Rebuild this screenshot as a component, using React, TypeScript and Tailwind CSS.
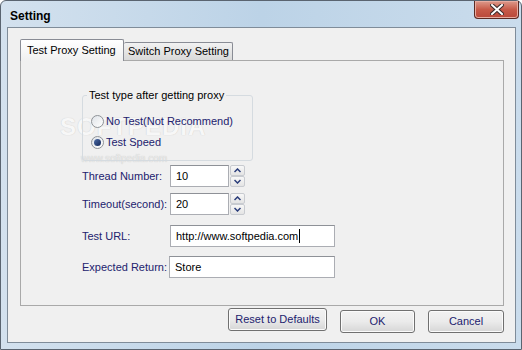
import type { ReactNode } from 'react'

const font = { fontFamily: '"Liberation Sans", Arial, sans-serif' }

function Radio({ checked, label }: { checked?: boolean; label: string }) {
  return (
    <label className="flex h-[14px] items-center gap-[1px] text-[11px] text-[#22226e]">
      <span className="flex h-[13px] w-[13px] items-center justify-center rounded-full border border-[#8e9297] bg-gradient-to-br from-[#dfe3e8] to-[#ffffff]">
        {checked && (
          <span className="h-[7px] w-[7px] rounded-full bg-gradient-to-br from-[#4f6ea8] to-[#14285a]" />
        )}
      </span>
      <span className="ml-[1px]">{label}</span>
    </label>
  )
}

function Chevron({ up }: { up?: boolean }) {
  return (
    <svg width="7" height="5" viewBox="0 0 7 5">
      <path
        d={up ? 'M0.5 4 L3.5 1 L6.5 4' : 'M0.5 1 L3.5 4 L6.5 1'}
        fill="none"
        stroke="#2a3d7a"
        strokeWidth="1.5"
      />
    </svg>
  )
}

function Spinner() {
  return (
    <div className="ml-[1px] flex h-[22px] w-[15px] flex-col">
      <button className="flex h-[11px] items-center justify-center rounded-[2px] border border-[#c8cbd0] bg-gradient-to-b from-[#f8f8f8] to-[#e4e4e4]">
        <Chevron up />
      </button>
      <button className="flex h-[11px] items-center justify-center rounded-[2px] border border-[#c8cbd0] bg-gradient-to-b from-[#f8f8f8] to-[#e4e4e4]">
        <Chevron />
      </button>
    </div>
  )
}

function Field({ label, labelWidth, children }: { label: string; labelWidth: string; children: ReactNode }) {
  return (
    <div className="flex h-[22px] items-center">
      <span className={`${labelWidth} text-[11px] text-[#22226e]`}>{label}</span>
      {children}
    </div>
  )
}

function Input({ value, width, caret }: { value: string; width: string; caret?: boolean }) {
  return (
    <div
      className={`${width} flex h-[22px] items-center border border-[#abadb3] border-t-[#8e9197] bg-white pl-[5px] text-[11px] text-black`}
    >
      {value}
      {caret && <span className="ml-[1px] h-[14px] w-px bg-black" />}
    </div>
  )
}

function DialogButton({ children, width }: { children: ReactNode; width: string }) {
  return (
    <button
      className={`${width} h-[23px] rounded-[3px] border border-[#707070] bg-gradient-to-b from-[#f2f2f2] via-[#ebebeb] to-[#d6d6d6] text-[11px] text-[#22226e] shadow-[inset_0_0_0_1px_#fbfbfb]`}
    >
      {children}
    </button>
  )
}

export default function App() {
  return (
    <div style={font} className="h-[350px] w-[522px] overflow-hidden bg-white">
      <div className="flex h-[350px] w-[522px] flex-col rounded-t-[6px] border border-[#5a6470] bg-gradient-to-r from-[#d3e1ee] via-[#bcd3e7] to-[#cadcec] pb-[6px] pl-[6px] pr-[5px]">
        {/* title bar */}
        <div className="flex h-[26px] shrink-0 items-start justify-between">
          <span className="mt-[8px] pl-[3px] text-[12px] font-bold leading-[14px] text-black">Setting</span>
          <button className="mr-[-3px] flex h-[18px] w-[45px] items-center justify-center rounded-b-[4px] border border-t-0 border-[#5b2a23] bg-gradient-to-b from-[#dc9a8c] via-[#c75a48] to-[#b9483a] shadow-[inset_0_0_0_1px_#e8aca0]">
            <svg width="14" height="11" viewBox="0 0 14 11">
              <path d="M2 1 L12 10 M12 1 L2 10" stroke="#3a2a2a" strokeWidth="4" strokeLinecap="square" />
              <path d="M2 1 L12 10 M12 1 L2 10" stroke="#ffffff" strokeWidth="2" strokeLinecap="square" />
            </svg>
          </button>
        </div>

        {/* client area */}
        <div className="flex h-[316px] flex-col border border-[#7f8c99] bg-[#f0f0f0] pl-[12px] pr-[11px] pt-[11px]">
          {/* tabs */}
          <div className="flex h-[21px] items-end">
            <div className="relative z-10 -mb-px flex h-[22px] w-[104px] items-center rounded-t-[2px] border border-b-0 border-[#898c95] bg-gradient-to-b from-[#ffffff] to-[#f0f0f0] pl-[6px] text-[11px] text-black">
              Test Proxy Setting
            </div>
            <div className="flex h-[18px] w-[109px] items-center rounded-t-[2px] border border-b-0 border-l-0 border-[#898c95] bg-gradient-to-b from-[#f2f2f2] to-[#d9d9d9] pl-[4px] text-[11px] text-black">
              Switch Proxy Setting
            </div>
          </div>

          {/* panel */}
          <div className="relative h-[246px] border border-[#a9a9a9] bg-[#f0f0f0] pl-[61px] pt-[28px]">
            {/* watermark */}
            <span className="pointer-events-none absolute left-[39px] top-[48px] text-[24px] font-bold tracking-[1px] text-[#f7f7f7] [text-shadow:0_0_1px_#c4c4c4]">
              SOFTPEDIA
            </span>
            <span className="pointer-events-none absolute left-[60px] top-[90px] text-[10px] text-[#ebebeb] [text-shadow:0_0_1px_#bdbdbd]">
              www.softpedia.com
            </span>

            <fieldset className="relative h-[72px] w-[171px] rounded-[3px] border border-[#d5dbe0] pb-[10px]">
              <legend className="ml-[4px] px-[2px] text-[11px] leading-[13px] text-black">
                Test type after getting proxy
              </legend>
              <div className="mt-[12px] flex flex-col gap-[7px] pl-[8px]">
                <Radio label="No Test(Not Recommend)" />
                <Radio checked label="Test Speed" />
              </div>
            </fieldset>

            <div className="mt-[4px] flex flex-col">
              <Field label="Thread Number:" labelWidth="w-[88px]">
                <Input value="10" width="w-[59px]" />
                <Spinner />
              </Field>
              <div className="mt-[6px]">
                <Field label="Timeout(second):" labelWidth="w-[88px]">
                  <Input value="20" width="w-[59px]" />
                  <Spinner />
                </Field>
              </div>
              <div className="mt-[10px]">
                <Field label="Test URL:" labelWidth="w-[88px]">
                  <Input value="http://www.softpedia.com" width="w-[165px]" caret />
                </Field>
              </div>
              <div className="mt-[9px]">
                <Field label="Expected Return:" labelWidth="w-[87px]">
                  <Input value="Store" width="w-[166px]" />
                </Field>
              </div>
            </div>
          </div>

          {/* buttons */}
          <div className="mt-[2px] flex justify-end">
            <DialogButton width="w-[99px]">Reset to Defaults</DialogButton>
            <div className="ml-[13px]">
              <DialogButton width="w-[75px]">OK</DialogButton>
            </div>
            <div className="ml-[13px]">
              <DialogButton width="w-[76px]">Cancel</DialogButton>
            </div>
          </div>
        </div>
      </div>
    </div>
  )
}
